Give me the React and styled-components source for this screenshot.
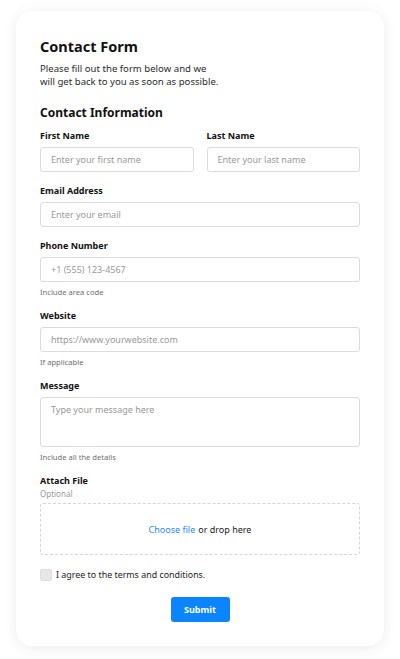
import React from 'react';
import styled, {createGlobalStyle} from "styled-components";

const Global = createGlobalStyle`
  html, body {
    margin: 0;
    padding: 0;
    background: #fff;
  }
  body {
    font-family: "Noto Sans", "Open Sans", sans-serif;
    color: #111;
  }
  * { box-sizing: border-box; }
`;

const Page = styled.div`
  padding: 11px 16px 13px 16px;
`;

const Card = styled.form`
  background: #fff;
  border-radius: 16px;
  box-shadow: 0 2px 14px rgba(0, 0, 0, 0.08);
  padding: 25px 24px 24px 24px;
  display: flex;
  flex-direction: column;
`;

const Title = styled.h1`
  font-size: 14.5px;
  line-height: 20px;
  font-weight: 700;
  margin: 0 0 6px 0;
`;

const Intro = styled.p`
  font-size: 9.6px;
  line-height: 13px;
  color: #2a2a2a;
  margin: 0 0 17px 0;
  max-width: 180px;
`;

const SectionTitle = styled.h2`
  font-size: 12px;
  line-height: 16px;
  font-weight: 700;
  margin: 0 0 9px 0;
`;

const Row = styled.div`
  display: grid;
  grid-template-columns: 1fr 1fr;
  gap: 13px;
`;

const Field = styled.div`
  display: flex;
  flex-direction: column;
  margin-bottom: ${({$mb}) => $mb ?? 13}px;
`;

const Label = styled.label`
  font-size: 9px;
  line-height: 12px;
  font-weight: 700;
  margin-bottom: 5px;
`;

const Input = styled.input`
  height: 25px;
  border: 1px solid #dcdcdc;
  border-radius: 3px;
  padding: 0 10px;
  font-family: inherit;
  font-size: 9px;
  color: #111;
  width: 100%;
  &::placeholder { color: #999; }
`;

const Area = styled.textarea`
  height: 50px;
  border: 1px solid #dcdcdc;
  border-radius: 3px;
  padding: 6px 10px;
  font-family: inherit;
  font-size: 9px;
  line-height: 12px;
  resize: none;
  &::placeholder { color: #999; }
`;

const Hint = styled.span`
  font-size: 7.6px;
  line-height: 10px;
  color: #707070;
  margin-top: 5px;
`;

const Optional = styled.span`
  font-size: 8px;
  line-height: 10px;
  color: #999;
  margin: -3px 0 4px 0;
`;

const Drop = styled.div`
  height: 52px;
  border: 1px dashed #d6d6d6;
  border-radius: 3px;
  display: flex;
  align-items: center;
  justify-content: center;
  font-size: 9px;
  color: #222;
`;

const Link = styled.span`
  color: #1f8bff;
  margin-right: 3px;
`;

const Agree = styled.label`
  display: flex;
  align-items: center;
  gap: 4px;
  font-size: 8.9px;
  color: #222;
  margin: 0 0 16px 0;
`;

const Box = styled.span`
  width: 12px;
  height: 12px;
  border-radius: 2px;
  background: #e7e7e7;
  border: 1px solid #dedede;
`;

const Submit = styled.button`
  align-self: center;
  width: 59px;
  height: 25px;
  border: none;
  border-radius: 3px;
  background: #0a84ff;
  color: #fff;
  font-family: inherit;
  font-weight: 700;
  font-size: 9px;
`;

export default function App() {
	return (<>
		<Global/>
		<Page>
			<Card onSubmit={e => e.preventDefault()}>
				<Title>Contact Form</Title>
				<Intro>Please fill out the form below and we will get back to you as soon as possible.</Intro>
				<SectionTitle>Contact Information</SectionTitle>
				<Row>
					<Field>
						<Label>First Name</Label>
						<Input placeholder="Enter your first name"/>
					</Field>
					<Field>
						<Label>Last Name</Label>
						<Input placeholder="Enter your last name"/>
					</Field>
				</Row>
				<Field>
					<Label>Email Address</Label>
					<Input placeholder="Enter your email"/>
				</Field>
				<Field>
					<Label>Phone Number</Label>
					<Input placeholder="+1 (555) 123-4567"/>
					<Hint>Include area code</Hint>
				</Field>
				<Field>
					<Label>Website</Label>
					<Input placeholder="https://www.yourwebsite.com"/>
					<Hint>If applicable</Hint>
				</Field>
				<Field>
					<Label>Message</Label>
					<Area placeholder="Type your message here"/>
					<Hint>Include all the details</Hint>
				</Field>
				<Field $mb={13}>
					<Label>Attach File</Label>
					<Optional>Optional</Optional>
					<Drop><Link>Choose file</Link> or drop here</Drop>
				</Field>
				<Agree><Box/>I agree to the terms and conditions.</Agree>
				<Submit type="submit">Submit</Submit>
			</Card>
		</Page>
	</>);
}
